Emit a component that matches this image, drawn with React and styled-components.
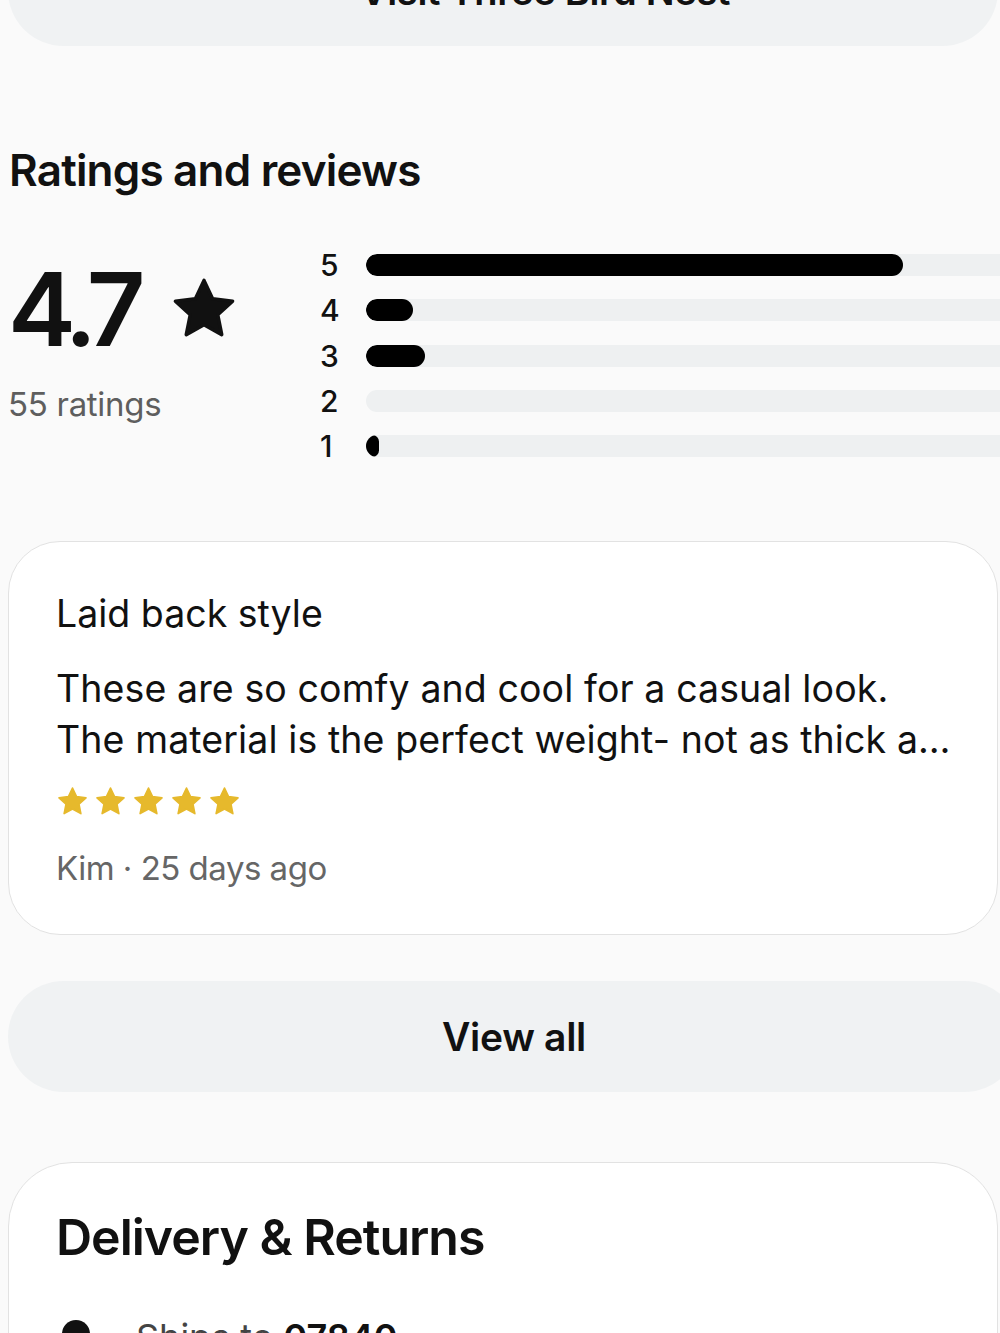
import React from "react";
import styled, { createGlobalStyle } from "styled-components";

const Global = createGlobalStyle`
  html, body { margin: 0; padding: 0; background: #fafafa; overflow: hidden; }
  body { font-family: Inter, "Noto Sans", Arial, sans-serif; color: #111; }
  * { box-sizing: border-box; }
`;

const Page = styled.div`
  width: 1000px;
  height: 1333px;
  overflow: hidden;
  padding-left: 8px;
`;

const PillButton = styled.button`
  display: flex;
  align-items: center;
  justify-content: center;
  width: ${(p) => p.$width || "990px"};
  height: ${(p) => p.$height || "111px"};
  margin: ${(p) => p.$margin || "0"};
  border: none;
  border-radius: 56px;
  background: #f0f2f3;
  font-family: Inter, Arial, sans-serif;
  font-size: ${(p) => p.$size || "38px"};
  font-weight: 600;
  color: #111;
  letter-spacing: -0.3px;
  padding: 0 0 0 ${(p) => p.$shift || "0px"};
`;

const VisitIcon = styled.span`
  width: 14px;
  height: 14px;
  border: 3px solid #111;
  border-radius: 50%;
  display: inline-block;
  margin-right: 40px;
`;

const Heading = styled.h2`
  margin: 96px 0 0 1px;
  font-size: 44px;
  font-weight: 600;
  letter-spacing: -0.8px;
  line-height: 56px;
  color: #111;
`;

const Summary = styled.div`
  display: flex;
  margin-top: 56px;
`;

const ScoreCol = styled.div`
  width: 312px;
  flex: none;
  padding-top: 5px;
`;

const ScoreRow = styled.div`
  display: flex;
  align-items: center;
  gap: 31px;
`;

const Score = styled.div`
  font-size: 102px;
  font-weight: 600;
  letter-spacing: -8px;
  line-height: 100px;
  color: #111;
`;

const ScoreStar = styled.span`
  display: flex;
  margin-top: 0;
`;

const CountText = styled.div`
  margin-top: 25px;
  font-size: 33px;
  color: #5e5e5e;
  letter-spacing: -0.3px;
`;

const Bars = styled.div`
  flex: 1;
  display: flex;
  flex-direction: column;
  gap: 23px;
`;

const BarRow = styled.div`
  display: flex;
  align-items: center;
  height: 22.3px;
`;

const BarLabel = styled.span`
  width: 46px;
  font-size: 30px;
  font-weight: 500;
  color: #111;
  text-align: left;
`;

const Track = styled.div`
  flex: 1;
  height: 22px;
  margin-right: -20px;
  border-radius: 11px;
  background: #eef0f1;
  overflow: hidden;
`;

const Fill = styled.div`
  height: 100%;
  border-radius: 11px;
  background: #000;
`;

const Card = styled.div`
  width: 990px;
  margin-top: ${(p) => p.$mt || "0"};
  background: #fff;
  border: 1.5px solid #e2e2e2;
  border-radius: ${(p) => p.$radius || "52px"};
  padding: ${(p) => p.$pad || "48px 47px 46px 47px"};
`;

const ReviewTitle = styled.div`
  font-size: 37.5px;
  line-height: 48px;
  color: #111;
  letter-spacing: 0;
`;

const ReviewBody = styled.div`
  margin-top: 25px;
  font-size: 37.5px;
  line-height: 51px;
  color: #111;
  letter-spacing: 0.1px;
`;

const BodyLine = styled.div`
  white-space: nowrap;
`;

const Stars = styled.div`
  display: flex;
  gap: 5px;
  margin-top: 20px;
`;

const Meta = styled.div`
  margin-top: 30px;
  font-size: 33px;
  color: #666;
  letter-spacing: -0.5px;
`;

const DeliveryTitle = styled.h3`
  margin: 0;
  font-size: 50px;
  font-weight: 600;
  letter-spacing: -1px;
  line-height: 60px;
  color: #111;
`;

const ShipRow = styled.div`
  display: flex;
  align-items: center;
  gap: 46px;
  margin-top: 48px;
  padding-left: 6px;
  font-size: 36px;
  line-height: 44px;
  color: #444;
`;

const Dot = styled.span`
  width: 28px;
  height: 28px;
  border-radius: 50%;
  background: #111;
  display: inline-block;
  margin-top: -6px;
`;

const Zip = styled.b`
  color: #111;
  font-weight: 600;
`;

const StarIcon = ({ size, color }) => (
  <svg width={size} height={size} viewBox="0 0 24 24">
    <path
      d="M12 2.2l2.95 6.3 6.85.8-5.08 4.7 1.36 6.8L12 17.4l-6.08 3.4 1.36-6.8L2.2 9.3l6.85-.8z"
      fill={color}
      stroke={color}
      strokeWidth="1.2"
      strokeLinejoin="round"
    />
  </svg>
);

const bars = [
  { n: 5, w: 537 },
  { n: 4, w: 47 },
  { n: 3, w: 59 },
  { n: 2, w: 0 },
  { n: 1, w: 13 },
];

export default function App() {
  return (
    <>
      <Global />
      <Page>
        <PillButton $margin="-65px 0 0 0" $shift="30px">
          <VisitIcon />
          Visit Three Bird Nest
        </PillButton>

        <Heading>Ratings and reviews</Heading>

        <Summary>
          <ScoreCol>
            <ScoreRow>
              <Score>4.7</Score>
              <ScoreStar>
                <StarIcon size={70} color="#111" />
              </ScoreStar>
            </ScoreRow>
            <CountText>55 ratings</CountText>
          </ScoreCol>
          <Bars>
            {bars.map((b) => (
              <BarRow key={b.n}>
                <BarLabel>{b.n}</BarLabel>
                <Track>
                  <Fill style={{ width: b.w }} />
                </Track>
              </BarRow>
            ))}
          </Bars>
        </Summary>

        <Card $mt="84px">
          <ReviewTitle>Laid back style</ReviewTitle>
          <ReviewBody>
            <BodyLine>These are so comfy and cool for a casual look.</BodyLine>
            <BodyLine>The material is the perfect weight- not as thick a…</BodyLine>
          </ReviewBody>
          <Stars>
            {[0, 1, 2, 3, 4].map((i) => (
              <StarIcon key={i} size={33} color="#e6b92c" />
            ))}
          </Stars>
          <Meta>Kim · 25 days ago</Meta>
        </Card>

        <PillButton $margin="46px 0 0 0" $width="1012px" $size="39px">View all</PillButton>

        <Card $mt="70px" $pad="44px 47px" $radius="64px">
          <DeliveryTitle>Delivery &amp; Returns</DeliveryTitle>
          <ShipRow>
            <Dot />
            <span>
              Ships to <Zip>07840</Zip>
            </span>
          </ShipRow>
        </Card>
      </Page>
    </>
  );
}
